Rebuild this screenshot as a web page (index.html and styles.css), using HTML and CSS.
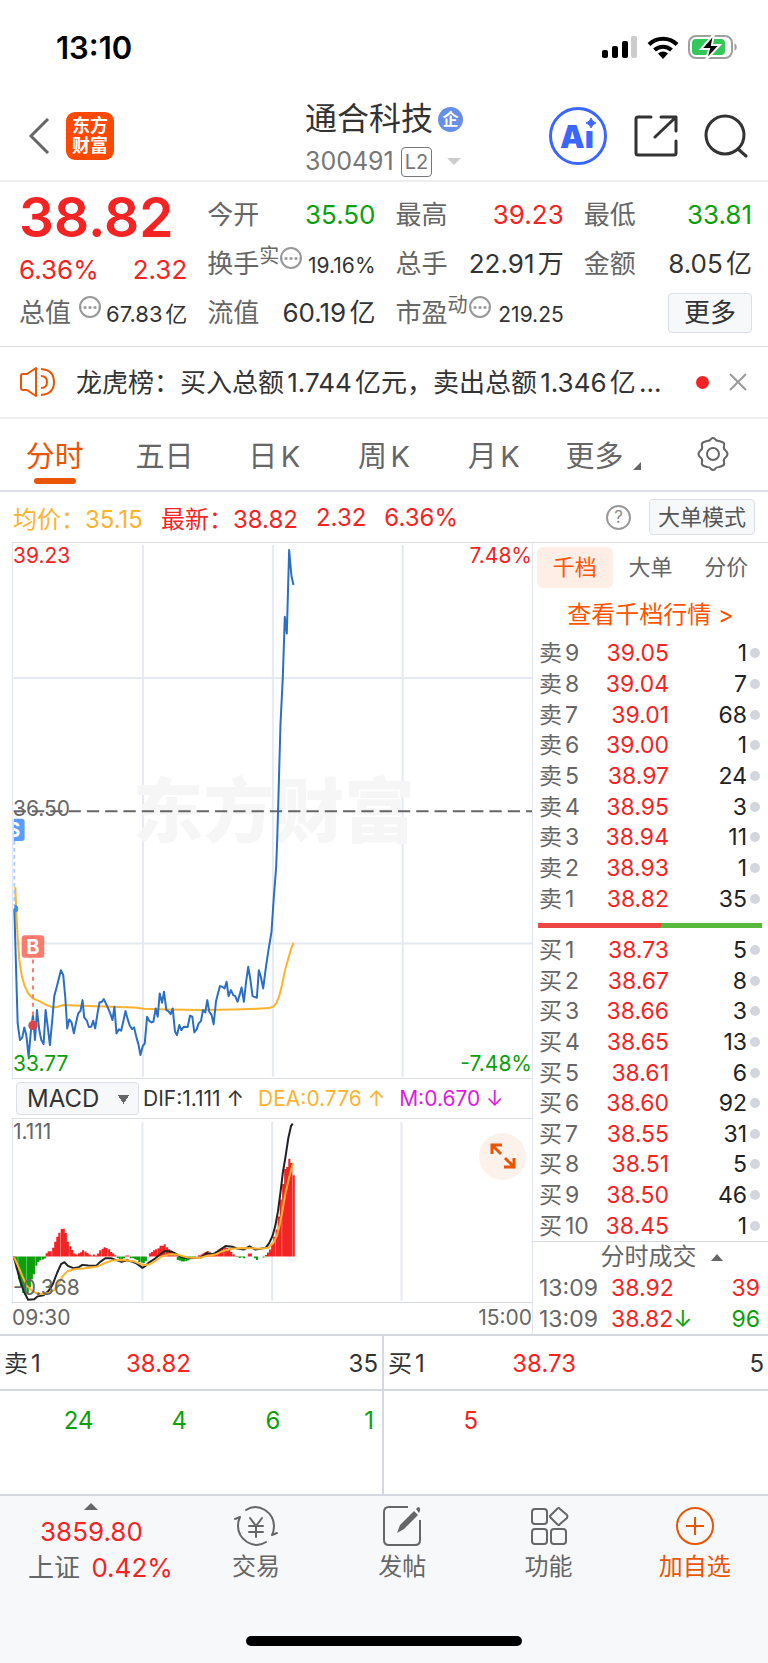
FILE: index.html
```html
<!DOCTYPE html>
<html lang="zh-CN">
<head>
  <meta charset="UTF-8" />
  <meta name="viewport" content="width=device-width, initial-scale=1" />
  <title>通合科技 300491</title>
  <link rel="stylesheet" href="styles.css">
</head>
<body>

  <div class="status">
    <span class="clock">13:10</span>
    <div class="status-icons">
      <svg width="36" height="24" viewBox="0 0 36 24" aria-hidden="true">
        <rect x="0" y="15" width="6" height="8" rx="2"/>
        <rect x="10" y="11" width="6" height="12" rx="2"/>
        <rect x="20" y="6" width="6" height="17" rx="2"/>
        <rect x="29" y="1" width="6" height="22" rx="2" fill="#ccc"/>
      </svg>
      <svg width="32" height="24" viewBox="0 0 32 24" fill="none" stroke="#000" stroke-width="4" aria-hidden="true">
        <path d="M2 9.500a20 20 0 0 1 28 0"/>
        <path d="M7.500 15a12.500 12.500 0 0 1 17 0"/>
        <path d="M16 24l-5-5.500a7.500 7.500 0 0 1 10 0z" fill="#000" stroke="none"/>
      </svg>
      <svg width="50" height="26" viewBox="0 0 50 26" aria-hidden="true">
        <rect x="1" y="2" width="43" height="22" rx="7" fill="none" stroke="#a0a0a0" stroke-width="2"/>
        <path d="M46.500 9.500c3 1 3 6 0 7z" fill="#a0a0a0"/>
        <rect x="4" y="5" width="33" height="16" rx="4" fill="#34c759"/>
        <path d="M26 0L13 15h8l-3 11 14-15h-8z" stroke="#fff" stroke-width="2"/>
      </svg>
    </div>
  </div>

  <header class="nav">
    <div class="nav-left">
      <button class="icon-btn" aria-label="返回">
        <svg width="22" height="36" viewBox="0 0 22 36" fill="none" stroke="#666" stroke-width="3"><path d="M20 1L3 18l17 17"/></svg>
      </button>
      <a class="logo" href="#"><span>东方</span><span>财富</span></a>
    </div>
    <div class="nav-title">
      <h1>通合科技<span class="badge">企</span></h1>
      <p class="code">300491 <span class="level">L2</span><i class="tri-down"></i></p>
    </div>
    <div class="nav-right">
      <button class="icon-btn" aria-label="Ai">
        <svg width="60" height="60" viewBox="0 0 60 60">
          <circle cx="30" cy="30" r="27.500" fill="#fff" stroke="#3b66ff" stroke-width="3"/>
          <text class="ai" x="12" y="42">Aı</text>
          <path d="M43 12q1 4 5 5-4 1-5 5-1-4-5-5 4-1 5-5z" fill="#3b66ff" stroke="#3b66ff"/>
        </svg>
      </button>
      <button class="icon-btn" aria-label="分享">
        <svg width="44" height="44" viewBox="0 0 44 44" fill="none" stroke="#333" stroke-width="3" stroke-linecap="round" stroke-linejoin="round"><path d="M17 3H4q-2 0-2 2v34q0 2 2 2h36q2 0 2-2V27M27 3h15v14M42 3L21 23"/></svg>
      </button>
      <button class="icon-btn" aria-label="搜索">
        <svg width="44" height="44" viewBox="0 0 44 44" fill="none" stroke="#333" stroke-width="3" stroke-linecap="round"><circle cx="21" cy="21" r="19"/><path d="M34 35l8 7"/></svg>
      </button>
    </div>
  </header>

  <section class="quote">
    <div class="quote-col price-col">
      <div class="price">38.82</div>
      <div class="pair change red"><span>6.36%</span><span>2.32</span></div>
      <div class="pair"><span class="label">总值 <i class="more-dot"></i></span><span class="mid">67.83亿</span></div>
    </div>
    <div class="quote-col">
      <div class="pair"><span class="label">今开</span><span class="green">35.50</span></div>
      <div class="pair"><span class="label">换手<sup>实</sup><i class="more-dot"></i></span><span class="small">19.16%</span></div>
      <div class="pair"><span class="label">流值</span><span>60.19亿</span></div>
    </div>
    <div class="quote-col">
      <div class="pair"><span class="label">最高</span><span class="red">39.23</span></div>
      <div class="pair"><span class="label">总手</span><span>22.91万</span></div>
      <div class="pair"><span class="label">市盈<sup>动</sup><i class="more-dot"></i></span><span class="small">219.25</span></div>
    </div>
    <div class="quote-col">
      <div class="pair"><span class="label">最低</span><span class="green">33.81</span></div>
      <div class="pair"><span class="label">金额</span><span>8.05亿</span></div>
      <div class="pair end"><button class="box-btn more-btn">更多</button></div>
    </div>
  </section>

  <section class="news">
    <svg width="36" height="30" viewBox="0 0 36 30" fill="none" stroke="#ea5504" stroke-width="2" stroke-linejoin="round"><path d="M1 9q0-2 2-2h4l9-6v28l-9-6H3q-2 0-2-2zM21 9q6 0 6 6t-6 6M21 2q13 1 13 13T21 28"/></svg>
    <a href="#">龙虎榜：买入总额1.744亿元，卖出总额1.346亿...</a>
    <i class="unread"></i>
    <button class="icon-btn" aria-label="关闭">
      <svg width="18" height="18" viewBox="0 0 18 18" stroke="#999" stroke-width="2"><path d="M1 1l16 16M17 1L1 17"/></svg>
    </button>
  </section>

  <nav class="tabs">
    <button class="active">分时</button>
    <button>五日</button>
    <button>日K</button>
    <button>周K</button>
    <button>月K</button>
    <button>更多<i class="corner"></i></button>
    <button aria-label="设置">
      <svg width="36" height="34" viewBox="0 0 36 34" fill="none" stroke="#666" stroke-width="2" stroke-linejoin="round"><path d="M12 4q3 0 4-2 2-2 4 0 1 2 4 2l3 1q3 1 2 4-1 3 2 5 3 3 0 6-3 2-2 5 1 3-2 4l-3 1q-3 0-4 2-2 2-4 0-1-2-4-2l-3-1q-3-1-2-4 1-3-2-5-3-3 0-6 3-2 2-5-1-3 2-4z"/><circle cx="18" cy="17" r="6"/></svg>
    </button>
  </nav>

  <div class="info">
    <span class="yellow">均价：35.15</span>
    <span class="red">最新：38.82</span>
    <span class="red">2.32</span>
    <span class="red">6.36%</span>
    <button class="help" aria-label="帮助">?</button>
    <button class="box-btn mode-btn">大单模式</button>
  </div>

  <main class="main">
    <section class="charts">
      <div class="chart">
        <svg viewBox="36 -714 1560 1608" role="img" aria-label="分时走势">
          <g class="grid">
            <path d="M427-708V890M817-708V890M1207-708V890M38-308H1596M38 490H1596"/>
          </g>
          <text class="watermark" x="396" y="170">东方财富</text>
          <path d="M38 92H1596" stroke="#666" stroke-width="6" stroke-dasharray="37 18"/>
          <polyline class="line" stroke="#fdb32f" points="43,320 46,400 50,470 55,540 62,585 70,615 82,640 96,655 115,663 135,674 155,682 172,680 185,675 240,677 330,680 400,682 430,686 500,688 600,690 700,688 770,686 805,684 818,680 828,668 837,645 845,612 855,565 865,530 872,505 879,488"/>
          <polyline class="line" stroke="#2b6fc4" points="40,385 50,730 57,780 64,772 70,742 76,765 83,830 90,750 96,705 102,780 108,690 115,750 121,780 128,792 134,690 141,745 147,795 154,720 160,648 167,622 173,598 180,570 187,585 193,650 199,745 205,718 212,727 219,760 225,730 232,700 239,692 245,660 250,712 258,722 264,741 271,740 277,722 283,745 290,700 296,667 303,665 309,657 316,672 322,685 329,702 335,720 341,680 347,760 354,748 361,752 368,722 374,693 381,718 387,737 394,747 400,742 407,772 413,793 419,825 426,798 432,790 439,710 445,722 452,727 458,725 465,685 471,710 477,640 484,668 490,635 497,690 503,693 510,702 516,685 523,755 529,765 536,735 542,750 549,740 561,741 568,707 575,710 581,757 588,748 594,730 601,723 607,690 614,697 620,660 626,695 633,705 639,733 646,665 652,640 658,618 665,620 672,625 678,605 684,648 691,630 698,645 704,648 711,665 717,645 723,622 730,665 736,610 743,560 749,595 756,648 769,653 775,570 781,590 788,625 795,570 803,515 813,455 820,350 827,260 830,180 833,80 840,-170 847,-310 853,-492 859,-442 866,-693 873,-615 879,-588"/>
          <path d="M40 182V375" stroke="#a9c8f5" stroke-width="5" stroke-dasharray="11 10"/>
          <path d="M40 373a12 12 0 0 1 0 24z" fill="#4a90d9"/>
          <path d="M38 115H62q9 0 9 9V173q0 9-9 9H38z" fill="#5b9dff"/>
          <svg x="38" y="115" width="40" height="70"><text class="mark" x="0" y="54" text-anchor="middle">S</text></svg>
          <path d="M96 538V722" stroke="#fd7a6e" stroke-width="6" stroke-dasharray="12 14"/>
          <circle cx="96" cy="736" r="14" fill="#d6474f"/>
          <rect x="62" y="465" width="68" height="68" rx="10" fill="#fd7a6e"/>
          <text class="mark" x="96" y="520" text-anchor="middle">B</text>
        </svg>
        <span class="tag top-left red">39.23</span>
        <span class="tag top-right red">7.48%</span>
        <span class="tag middle">36.50</span>
        <span class="tag bottom-left green">33.77</span>
        <span class="tag bottom-right green">-7.48%</span>
      </div>

      <div class="indicator">
        <select aria-label="指标"><option>MACD</option></select>
        <span>DIF:1.111 ↑</span>
        <span class="yellow">DEA:0.776 ↑</span>
        <span class="magenta">M:0.670 ↓</span>
      </div>

      <div class="macd">
        <svg viewBox="36 147 1512 552" preserveAspectRatio="none" role="img" aria-label="MACD">
          <g class="grid">
            <path d="M413 155V695M791 155V695M1168 155V695"/>
          </g>
          <path class="bars" stroke="#0aa00a" d="M41 562V572M47 562V600M54 562V630M60 562V655M66 562V672M72 562V677M79 562V672M85 562V655M91 562V630M97 562V615M104 562V590M110 562V578M116 562V573M123 562V571M129 562V568M341 562V566M347 562V570M354 562V573M360 562V567M379 562V567M386 562V567M392 562V570M398 562V572M404 562V578M411 562V580M417 562V582M423 562V576M516 562V572M522 562V574M528 562V577M534 562V577M541 562V576M547 562V573M553 562V569M560 562V567M566 562V566M691 562V564M697 562V566M703 562V564M709 562V567M741 562V567M747 562V572M766 562V565"/>
          <path class="bars" stroke="#f52424" d="M134 562V552M140 562V546M146 562V546M153 562V535M159 562V517M165 562V502M171 562V490M178 562V479M184 562V478M190 562V491M196 562V517M203 562V531M209 562V542M215 562V553M221 562V556M228 562V552M234 562V549M240 562V543M247 562V547M253 562V551M259 562V556M265 562V559M272 562V556M278 562V559M284 562V553M290 562V543M297 562V538M303 562V534M309 562V536M316 562V540M322 562V548M328 562V553M334 562V558M366 562V559M372 562V559M435 562V552M441 562V548M447 562V543M453 562V540M460 562V537M466 562V529M472 562V529M478 562V525M485 562V534M491 562V540M497 562V548M503 562V553M510 562V558M578 562V558M585 562V556M591 562V552M597 562V548M603 562V545M610 562V550M616 562V553M622 562V550M628 562V546M635 562V541M641 562V537M647 562V534M654 562V534M660 562V536M666 562V541M672 562V548M679 562V555M685 562V560M723 562V553M729 562V553M773 562V557M779 562V550M785 562V541M791 562V522M797 562V502M804 562V480M810 562V441M816 562V390M823 562V343M829 562V298M835 562V292M841 562V267M847 562V280M854 562V317"/>
          <polyline class="line" stroke="#222" points="38,562 48,600 58,640 68,668 80,692 98,691 108,682 125,679 140,665 152,645 165,610 176,585 186,579 196,590 212,597 228,594 238,587 255,589 278,590 290,578 305,567 322,567 335,572 352,578 368,573 385,578 398,584 413,596 422,590 432,580 450,568 465,555 478,545 498,547 510,553 525,563 545,567 565,566 582,565 600,552 620,555 635,545 655,530 675,532 690,538 708,541 725,531 742,541 758,538 772,536 782,522 792,500 800,470 808,425 815,370 822,310 830,260 838,205 846,168 851,161"/>
          <polyline class="line" stroke="#fdb32f" points="38,562 50,588 62,618 75,648 90,664 105,673 122,675 140,672 155,664 168,645 180,622 195,606 215,600 245,597 280,593 300,583 325,574 345,572 365,573 390,577 415,588 435,585 450,576 468,562 490,555 515,556 545,565 580,566 600,560 625,556 645,546 670,539 700,536 730,537 760,538 780,535 795,520 805,498 812,470 820,430 830,370 840,325 852,280"/>
        </svg>
        <span class="tag top-left">1.111</span>
        <span class="tag bottom-left">-0.368</span>
        <button class="expand" aria-label="全屏">
          <svg width="26" height="26" viewBox="0 0 26 26" fill="none" stroke="#ea5504" stroke-width="3"><path d="M2 11V2h10M3 3l8 8M24 15v9H14M23 23l-8-8"/></svg>
        </button>
      </div>

      <div class="axis"><span>09:30</span><span>15:00</span></div>
    </section>

    <aside class="panel">
      <div class="panel-tabs">
        <button class="active">千档</button>
        <button>大单</button>
        <button>分价</button>
      </div>
      <a class="depth-link" href="#">查看千档行情 &gt;</a>

      <table class="book sell">
        <tr><td>卖9</td><td>39.05</td><td>1</td><td><i></i></td></tr>
        <tr><td>卖8</td><td>39.04</td><td>7</td><td><i></i></td></tr>
        <tr><td>卖7</td><td>39.01</td><td>68</td><td><i></i></td></tr>
        <tr><td>卖6</td><td>39.00</td><td>1</td><td><i></i></td></tr>
        <tr><td>卖5</td><td>38.97</td><td>24</td><td><i></i></td></tr>
        <tr><td>卖4</td><td>38.95</td><td>3</td><td><i></i></td></tr>
        <tr><td>卖3</td><td>38.94</td><td>11</td><td><i></i></td></tr>
        <tr><td>卖2</td><td>38.93</td><td>1</td><td><i></i></td></tr>
        <tr><td>卖1</td><td>38.82</td><td>35</td><td><i></i></td></tr>
      </table>
      <div class="ratio"></div>
      <table class="book buy">
        <tr><td>买1</td><td>38.73</td><td>5</td><td><i></i></td></tr>
        <tr><td>买2</td><td>38.67</td><td>8</td><td><i></i></td></tr>
        <tr><td>买3</td><td>38.66</td><td>3</td><td><i></i></td></tr>
        <tr><td>买4</td><td>38.65</td><td>13</td><td><i></i></td></tr>
        <tr><td>买5</td><td>38.61</td><td>6</td><td><i></i></td></tr>
        <tr><td>买6</td><td>38.60</td><td>92</td><td><i></i></td></tr>
        <tr><td>买7</td><td>38.55</td><td>31</td><td><i></i></td></tr>
        <tr><td>买8</td><td>38.51</td><td>5</td><td><i></i></td></tr>
        <tr><td>买9</td><td>38.50</td><td>46</td><td><i></i></td></tr>
        <tr><td>买10</td><td>38.45</td><td>1</td><td><i></i></td></tr>
      </table>

      <button class="deals-title">分时成交<i class="tri-up"></i></button>
      <table class="deals">
        <tr><td>13:09</td><td class="red">38.92</td><td class="red">39</td></tr>
        <tr><td>13:09</td><td class="red">38.82<span class="green">↓</span></td><td class="green">96</td></tr>
      </table>
    </aside>
  </main>

  <section class="queue">
    <div class="queue-side">
      <div class="queue-head"><span>卖1</span><span class="red">38.82</span><span>35</span></div>
      <div class="queue-list green"><span>24</span><span>4</span><span>6</span><span>1</span></div>
    </div>
    <div class="queue-side">
      <div class="queue-head"><span>买1</span><span class="red">38.73</span><span>5</span></div>
      <div class="queue-list red"><span>5</span></div>
    </div>
  </section>

  <footer class="bottom">
    <div class="bottom-bar">
      <a class="index" href="#">
        <i class="tri-up"></i>
        <span class="red">3859.80</span>
        <span class="index-change">上证 <b class="red">0.42%</b></span>
      </a>
      <a href="#">
        <svg width="46" height="42" viewBox="0 0 46 42" fill="none" stroke="#666" stroke-width="2" stroke-linecap="round" stroke-linejoin="round"><path d="M13 5Q22-1 32 5q9 6 9 16 0 5-2 9l5-2M33 37q-9 6-19 0-9-6-9-16 0-5 2-9l-5 2M17 13l6 8 6-8M16 21h14M16 27h14M23 21v11"/></svg>
        <span>交易</span>
      </a>
      <a href="#">
        <svg width="42" height="42" viewBox="0 0 42 42" fill="none" stroke="#666" stroke-width="2"><path d="M27 2H8Q3 2 3 7v28q0 5 5 5h26q5 0 5-5V15"/><path d="M16 28l3-8L33 6l4 4-14 14zM35 4l2-2q2 0 2 2v2l-1 2z" fill="#666" stroke="none"/></svg>
        <span>发帖</span>
      </a>
      <a href="#">
        <svg width="42" height="42" viewBox="0 0 42 42" fill="none" stroke="#666" stroke-width="2" stroke-linejoin="round"><rect x="4" y="4" width="15" height="15" rx="3"/><rect x="4" y="24" width="15" height="15" rx="3"/><rect x="23" y="24" width="15" height="15" rx="3"/><path d="M29 4q2-2 3 0l7 6q1 1 0 3l-7 6q-1 2-3 0l-6-6q-2-2 0-3z"/></svg>
        <span>功能</span>
      </a>
      <a class="add" href="#">
        <svg width="42" height="42" viewBox="0 0 42 42" fill="none" stroke="#ea5504" stroke-width="2"><circle cx="21" cy="21" r="18"/><path d="M21 12v18M12 21h18"/></svg>
        <span>加自选</span>
      </a>
    </div>
    <div class="home"></div>
  </footer>

</body>
</html>
```

FILE: styles.css
```css
* {
  box-sizing: border-box;
}
body {
  margin: 0;
  background: #fff;
  color: #333;
  font-family: Inter, "Noto Sans CJK SC", sans-serif;
  font-size: 24px;
  text-autospace: normal;
}
button, select {
  font: inherit;
  color: inherit;
  margin: 0;
  padding: 0;
  border: none;
  background: none;
}
a {
  color: inherit;
  text-decoration: none;
}
h1, p {
  margin: 0;
  font-weight: 400;
}
svg {
  display: block;
}
table {
  width: 100%;
  border-collapse: collapse;
  table-layout: fixed;
}
td {
  padding: 0;
}
.red {
  color: #f52424;
}
.green {
  color: #0aa00a;
}
.yellow {
  color: #fdb32f;
}
.magenta {
  color: #e01adf;
}

/* status bar */
.status {
  display: flex;
  justify-content: space-between;
  align-items: center;
  height: 90px;
  padding: 4px 30px 0 56px;
}
.clock {
  font-size: 31px;
  font-weight: 600;
  color: #000;
}
.status-icons {
  display: flex;
  align-items: center;
  gap: 9px;
}

/* nav bar */
.nav {
  display: grid;
  grid-template-columns: 1fr auto 1fr;
  align-items: center;
  height: 92px;
  padding: 0 20px;
  border-bottom: 2px solid #eee;
}
.nav-left, .nav-right {
  display: flex;
  align-items: center;
  gap: 16px;
}
.nav-left {
  padding-left: 8px;
}
.nav-right {
  justify-content: flex-end;
  gap: 26px;
}
.logo {
  display: flex;
  flex-direction: column;
  justify-content: center;
  align-items: center;
  width: 48px;
  height: 48px;
  border-radius: 9px;
  background: #ff4800;
  color: #fff;
  font-size: 18px;
  font-weight: 700;
  line-height: 20px;
}
.nav-title {
  padding-top: 6px;
}
.nav-title h1 {
  display: flex;
  align-items: center;
  gap: 5px;
  font-size: 32px;
  line-height: 46px;
}
.badge {
  width: 25px;
  height: 25px;
  border-radius: 50%;
  background: #6690e8;
  color: #fff;
  font-size: 16px;
  font-weight: 700;
  line-height: 25px;
  text-align: center;
}
.code {
  display: flex;
  align-items: center;
  gap: 7px;
  color: #777;
  font-size: 25px;
  line-height: 39px;
}
.level {
  padding: 0 3px;
  border: 1px solid #777;
  border-radius: 4px;
  font-size: 20px;
  line-height: 28px;
}
.tri-down {
  margin-left: 8px;
  border: 7px solid transparent;
  border-top-color: #ccc;
  border-bottom: none;
}
.ai {
  font-size: 31px;
  font-weight: 900;
  fill: #3b66ff;
}

/* quote */
.quote {
  display: grid;
  grid-template-columns: repeat(4, 1fr);
  column-gap: 20px;
  padding: 8px 16px 9px 19px;
  border-bottom: 1px solid #ddd;
  font-size: 26px;
}
.pair {
  display: flex;
  justify-content: space-between;
  align-items: baseline;
  height: 49px;
  line-height: 49px;
  white-space: nowrap;
}
.price {
  height: 55px;
  color: #f52424;
  font-size: 55px;
  font-weight: 600;
  line-height: 55px;
}
.price-col .change {
  height: 43px;
  line-height: 49px;
}
.label {
  color: #666;
}
.label sup {
  font-size: 20px;
  line-height: 0;
  vertical-align: 10px;
}
.more-dot {
  display: inline-block;
  width: 22px;
  height: 22px;
  margin-left: 1px;
  border: 2px solid #999;
  border-radius: 50%;
  vertical-align: 4px;
  background: radial-gradient(circle, #999 1px, transparent 2px) center / 5px 5px repeat-x;
}
.mid {
  font-size: 22px;
}
.small {
  font-size: 21px;
}
.pair.end {
  justify-content: flex-end;
  align-items: center;
}
.box-btn {
  border: 1px solid #dcdfe8;
  border-radius: 4px;
  background: #f7f8fa;
}
.more-btn {
  width: 84px;
  height: 40px;
  line-height: 36px;
}

/* news */
.news {
  display: flex;
  align-items: center;
  height: 72px;
  padding: 0 21px 0 20px;
  border-bottom: 2px solid #eee;
}
.news a {
  flex: 1;
  margin-left: 20px;
  padding-bottom: 4px;
  overflow: hidden;
  font-size: 26px;
  text-overflow: ellipsis;
  white-space: nowrap;
}
.unread {
  width: 13px;
  height: 13px;
  margin: 0 20px;
  border-radius: 50%;
  background: #f52424;
}

/* period tabs */
.tabs {
  display: grid;
  grid-template-columns: repeat(7, 1fr);
  height: 73px;
  border-bottom: 2px solid #dcdfe8;
}
.tabs button {
  position: relative;
  display: flex;
  justify-content: center;
  align-items: center;
  padding-bottom: 2px;
  color: #666;
  font-size: 29px;
}
.tabs .active {
  color: #ea5504;
}
.tabs .active::after {
  content: "";
  position: absolute;
  bottom: 6px;
  left: 50%;
  width: 42px;
  height: 6px;
  margin-left: -21px;
  border-radius: 3px;
  background: #ea5504;
}
.corner {
  align-self: flex-end;
  margin: 0 0 18px 10px;
  border-left: 8px solid transparent;
  border-bottom: 8px solid #666;
}

/* average / last price */
.info {
  display: flex;
  align-items: center;
  gap: 18px;
  height: 50px;
  padding: 0 13px;
}
.help {
  width: 25px;
  height: 25px;
  margin-left: auto;
  border: 2px solid #999;
  border-radius: 50%;
  color: #888;
  font-size: 17px;
  line-height: 20px;
}
.mode-btn {
  width: 106px;
  height: 36px;
  color: #555;
  font-size: 22px;
  line-height: 32px;
}

.main {
  display: grid;
  grid-template-columns: 1fr 236px;
  border-bottom: 2px solid #d6d8e0;
}

/* charts */
.charts {
  padding-left: 12px;
}
.chart, .macd {
  position: relative;
  border-top: 1px solid #dcdfe8;
  border-left: 1px solid #dfe4ee;
}
.chart svg {
  width: 100%;
}
.macd > svg {
  width: 100%;
  height: 183px;
}
.grid path {
  fill: none;
  stroke: #e5e9f1;
  stroke-width: 2px;
  vector-effect: non-scaling-stroke;
}
.line {
  fill: none;
  stroke-width: 2px;
  stroke-linejoin: round;
  vector-effect: non-scaling-stroke;
}
.bars {
  stroke-width: 6px;
}
.watermark {
  fill: #f6f6f6;
  font-size: 212px;
  font-weight: 900;
}
.mark {
  fill: #fff;
  font-size: 60px;
  font-weight: 700;
}
.tag {
  position: absolute;
  font-size: 21px;
  line-height: 24px;
  color: #666;
}
.tag.red {
  color: #f52424;
}
.tag.green {
  color: #0aa00a;
}
.top-left {
  top: 1px;
  left: 0;
}
.top-right {
  top: 1px;
  right: 0;
}
.middle {
  top: 50%;
  left: 0;
  margin-top: -13px;
}
.bottom-left {
  bottom: 2px;
  left: 0;
}
.bottom-right {
  right: 0;
  bottom: 2px;
}
.indicator {
  display: flex;
  align-items: center;
  gap: 14px;
  height: 40px;
  padding-left: 4px;
  border-top: 1px solid #dcdfe8;
  font-size: 21px;
}
.indicator select {
  width: 123px;
  height: 33px;
  margin-right: -10px;
  padding-left: 10px;
  border: 1px solid #dcdfe8;
  border-radius: 4px;
  appearance: none;
  background: conic-gradient(from -32deg at 50% 100%, #666 64deg, transparent 0) 101px 12px / 11px 9px no-repeat, #f7f8fa;
  font-size: 24px;
}
.expand {
  position: absolute;
  top: 14px;
  right: 6px;
  display: grid;
  place-items: center;
  width: 47px;
  height: 47px;
  border-radius: 50%;
  background: #fdf1eb;
}
.axis {
  display: flex;
  justify-content: space-between;
  border-top: 1px solid #d6d8e0;
  color: #666;
  font-size: 21px;
  line-height: 30px;
}

/* order book */
.panel {
  display: flex;
  flex-direction: column;
  border-top: 1px solid #dcdfe8;
  border-left: 1px solid #dfe4ee;
  font-size: 23px;
}
.panel-tabs {
  display: grid;
  grid-template-columns: repeat(3, 1fr);
  padding: 4px 4px 0;
}
.panel-tabs button {
  height: 41px;
  border-radius: 6px;
  color: #666;
  font-size: 22px;
  line-height: 37px;
}
.panel-tabs .active {
  background: #ffeee6;
  color: #ff5500;
}
.depth-link {
  height: 50px;
  color: #ff5500;
  font-size: 24px;
  line-height: 54px;
  text-align: center;
}
.book td {
  line-height: 30px;
  text-align: right;
}
.book td:nth-child(1) {
  width: 58px;
  padding-left: 6px;
  color: #666;
  text-align: left;
}
.book td:nth-child(2) {
  width: 78px;
  color: #f52424;
}
.book td:nth-child(3) {
  width: 78px;
  color: #222;
}
.book i {
  display: block;
  width: 10px;
  height: 10px;
  margin-left: 3px;
  border-radius: 50%;
  background: #d3d6dd;
}
.sell {
  height: 276px;
}
.buy {
  height: 306px;
}
.ratio {
  height: 5px;
  margin: 9px 6px 7px 5px;
  background: linear-gradient(120deg, #ee4545 55%, #57b83c 55%);
}
.deals-title {
  display: flex;
  justify-content: center;
  align-items: center;
  gap: 14px;
  padding-left: 22px;
  border-top: 1px solid #d6d8e0;
  color: #666;
  font-size: 24px;
  line-height: 30px;
}
.tri-up {
  border: 6px solid transparent;
  border-top: none;
  border-bottom: 7px solid #666;
}
.deals td {
  height: 31px;
  line-height: 30px;
}
.deals td:first-child {
  width: 78px;
  padding-left: 6px;
  color: #666;
}
.deals td:last-child {
  width: 60px;
  padding-right: 8px;
  text-align: right;
}

/* order queue */
.queue {
  display: grid;
  grid-template-columns: 1fr 1fr;
}
.queue-side:first-child {
  border-right: 2px solid #d6d8e0;
}
.queue-head {
  display: grid;
  grid-template-columns: 1fr 1fr 2fr;
  height: 55px;
  padding: 0 4px;
  border-bottom: 2px solid #d6d8e0;
  line-height: 56px;
}
.queue-head span:nth-child(2) {
  text-align: right;
}
.queue-head span:last-child {
  text-align: right;
}
.queue-list {
  display: grid;
  grid-template-columns: repeat(4, 1fr);
  height: 103px;
  padding-right: 8px;
  line-height: 60px;
  text-align: right;
}

/* bottom bar */
.bottom {
  height: 169px;
  border-top: 2px solid #d6d8e0;
  background: #f7f8fa;
}
.bottom-bar {
  display: grid;
  grid-template-columns: 5fr 4fr 4fr 4fr 4fr;
  height: 140px;
}
.bottom-bar a {
  display: flex;
  flex-direction: column;
  align-items: center;
  padding-top: 9px;
  color: #666;
  line-height: 40px;
}
.bottom-bar .index {
  padding-top: 7px;
  font-size: 26px;
  line-height: 36px;
}
.index .tri-up {
  margin-bottom: 4px;
  border-width: 0 7px 7px;
}
.index-change {
  padding-left: 18px;
}
.index b {
  margin-left: 4px;
  font-weight: 400;
}
.bottom-bar .add {
  color: #ea5504;
}
.home {
  width: 36%;
  height: 10px;
  margin: 0 auto;
  border-radius: 5px;
  background: #000;
}
```
